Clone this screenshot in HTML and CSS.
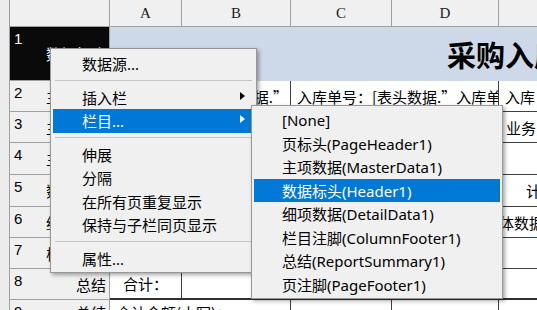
FILE: index.html
```html
<!DOCTYPE html>
<html lang="zh-CN">
<head>
    <meta charset="UTF-8">
    <meta name="viewport" content="width=device-width, initial-scale=1.0">
    <title>报表设计 - 栏目菜单</title>
    <link rel="stylesheet" href="styles.css">
</head>
<body>

    <div class="sheet">
        <div class="gutter"></div>

        <div class="grid">
            <!-- column headers -->
            <div class="corner"></div>
            <div class="col-head">A</div>
            <div class="col-head">B</div>
            <div class="col-head">C</div>
            <div class="col-head">D</div>
            <div class="col-head">E</div>

            <!-- row 1 -->
            <div class="row-head selected"><span class="num">1</span><span class="label">数据标头</span></div>
            <div class="cell title span-5">采购入库单</div>

            <!-- row 2 -->
            <div class="row-head"><span class="num">2</span><span class="label">主项数据</span></div>
            <div class="cell"></div>
            <div class="cell right">[表头数据.”</div>
            <div class="cell span-2">入库单号：[表头数据.”入库单号”]</div>
            <div class="cell">入库日期</div>

            <!-- row 3 -->
            <div class="row-head"><span class="num">3</span><span class="label">主项数据</span></div>
            <div class="cell"></div>
            <div class="cell"></div>
            <div class="cell"></div>
            <div class="cell"></div>
            <div class="cell pad-e3">业务员</div>

            <!-- row 4 -->
            <div class="row-head"><span class="num">4</span><span class="label">主项数据</span></div>
            <div class="cell"></div>
            <div class="cell"></div>
            <div class="cell"></div>
            <div class="cell"></div>
            <div class="cell"></div>

            <!-- row 5 -->
            <div class="row-head"><span class="num">5</span><span class="label">数据标头</span></div>
            <div class="cell"></div>
            <div class="cell"></div>
            <div class="cell"></div>
            <div class="cell"></div>
            <div class="cell pad-e5">计量单位</div>

            <!-- row 6 -->
            <div class="row-head"><span class="num">6</span><span class="label">细项数据</span></div>
            <div class="cell"></div>
            <div class="cell"></div>
            <div class="cell"></div>
            <div class="cell"></div>
            <div class="cell flush">体数据.”单位”]</div>

            <!-- row 7 -->
            <div class="row-head"><span class="num">7</span><span class="label">栏目注脚</span></div>
            <div class="cell"></div>
            <div class="cell"></div>
            <div class="cell"></div>
            <div class="cell"></div>
            <div class="cell"></div>

            <!-- row 8 -->
            <div class="row-head"><span class="num">8</span><span class="label">总结</span></div>
            <div class="cell center thick">合计：</div>
            <div class="cell thick"></div>
            <div class="cell thick"></div>
            <div class="cell thick"></div>
            <div class="cell thick"></div>

            <!-- row 9 -->
            <div class="row-head top"><span class="num">9</span><span class="label">总结</span></div>
            <div class="cell top span-2">合计金额(大写)：</div>
            <div class="cell top"></div>
            <div class="cell top"></div>
            <div class="cell top"></div>
        </div>

        <!-- context menu -->
        <div class="menu main-menu">
            <div class="menu-item">数据源...</div>
            <div class="menu-sep"></div>
            <div class="menu-item">插入栏<span class="arrow"></span></div>
            <div class="menu-item active">栏目...<span class="arrow"></span></div>
            <div class="menu-sep"></div>
            <div class="menu-item">伸展</div>
            <div class="menu-item">分隔</div>
            <div class="menu-item">在所有页重复显示</div>
            <div class="menu-item">保持与子栏同页显示</div>
            <div class="menu-sep"></div>
            <div class="menu-item">属性...</div>
        </div>

        <!-- submenu of 栏目... -->
        <div class="menu sub-menu">
            <div class="menu-item">[None]</div>
            <div class="menu-item">页标头(PageHeader1)</div>
            <div class="menu-item">主项数据(MasterData1)</div>
            <div class="menu-item active">数据标头(Header1)</div>
            <div class="menu-item">细项数据(DetailData1)</div>
            <div class="menu-item">栏目注脚(ColumnFooter1)</div>
            <div class="menu-item">总结(ReportSummary1)</div>
            <div class="menu-item">页注脚(PageFooter1)</div>
        </div>
    </div>

</body>
</html>
```

FILE: styles.css
```css
/* Basic Reset */
* {
    margin: 0;
    padding: 0;
    box-sizing: border-box;
}

body {
    width: 537px;
    height: 310px;
    overflow: hidden;
    background-color: #ffffff;
    color: #000000;
    font-family: "Noto Sans CJK SC", sans-serif;
}

.sheet {
    position: relative;
    display: flex;
    height: 310px;
}

/* thin strip on the left edge */
.gutter {
    width: 10px;
    flex-shrink: 0;
    background-color: #ececec;
    border-right: 1px solid #a0a0a0;
}

.grid {
    display: grid;
    grid-template-columns: 100px 72px 109px 101px 107px 200px;
    grid-template-rows: 27px 54px 31px 31px 32px 32px 31px 31px 31px 31px;
    flex-shrink: 0;
}

.corner,
.col-head {
    background-color: #f0f0f0;
    border-right: 1px solid #a0a0a0;
    border-bottom: 1px solid #a0a0a0;
}

.col-head {
    display: flex;
    align-items: center;
    justify-content: center;
    font-family: "Liberation Serif", serif;
    font-size: 15px;
    color: #202020;
}

.row-head {
    display: flex;
    justify-content: space-between;
    background-color: #f0f0f0;
    border-right: 1px solid #a0a0a0;
    border-bottom: 1px solid #a0a0a0;
    font-size: 15px;
}

.row-head.selected {
    background-color: #0a0a0a;
    color: #ffffff;
}

.row-head .num {
    padding: 3px 0 0 4px;
    font-family: "Liberation Sans", sans-serif;
    line-height: 17px;
}

.row-head .label {
    align-self: center;
    padding-right: 3px;
    white-space: nowrap;
}

.row-head.top .label {
    align-self: flex-start;
    padding-top: 2px;
}

.cell {
    display: flex;
    align-items: center;
    padding-left: 6px;
    font-size: 15px;
    white-space: nowrap;
    overflow: hidden;
    background-color: #ffffff;
    border-right: 1px solid #404040;
    border-bottom: 1px solid #404040;
}

.cell.title {
    padding-left: 337px;
    background-color: #cdd8e9;
    border: none;
    font-size: 29px;
    font-weight: 700;
}

.span-5 {
    grid-column: span 5;
}

.span-2 {
    grid-column: span 2;
}

.cell.right {
    justify-content: flex-end;
    padding: 0 2px 0 0;
}

.cell.center {
    justify-content: center;
    padding: 0;
}

.cell.flush {
    padding-left: 0;
}

.cell.pad-e3 {
    padding-left: 7px;
}

.cell.pad-e5 {
    padding-left: 27px;
}

.cell.thick {
    border-bottom: 2px solid #303030;
}

.cell.top {
    align-items: flex-start;
    padding-top: 2px;
}

/* context menus */
.menu {
    position: absolute;
    background-color: #f0f0f0;
    border: 1px solid #979797;
    box-shadow: 2px 2px 4px rgba(0, 0, 0, 0.35);
    font-family: "Noto Sans", "Noto Sans CJK SC", sans-serif;
    font-size: 15px;
    color: #000000;
}

.main-menu {
    left: 50px;
    top: 48px;
    width: 207px;
    padding: 3px 2px 2px 2px;
}

.sub-menu {
    left: 251px;
    top: 105px;
    width: 252px;
    padding: 2px;
}

.menu-item {
    display: flex;
    align-items: center;
    height: 23.5px;
    padding-left: 29px;
    white-space: nowrap;
}

.sub-menu .menu-item {
    padding-left: 28px;
}

.menu-item.active {
    background-color: #0078d7;
    color: #ffffff;
}

.menu-sep {
    height: 10px;
    padding-top: 4px;
    margin: 0 2px;
}

.menu-sep::before {
    content: "";
    display: block;
    height: 1px;
    background-color: #c4c4c4;
}

.arrow {
    margin-left: auto;
    margin-right: 9px;
    margin-top: -3px;
    width: 0;
    height: 0;
    border-left: 5px solid #000000;
    border-top: 4px solid transparent;
    border-bottom: 4px solid transparent;
}

.menu-item.active .arrow {
    border-left-color: #ffffff;
}
```
